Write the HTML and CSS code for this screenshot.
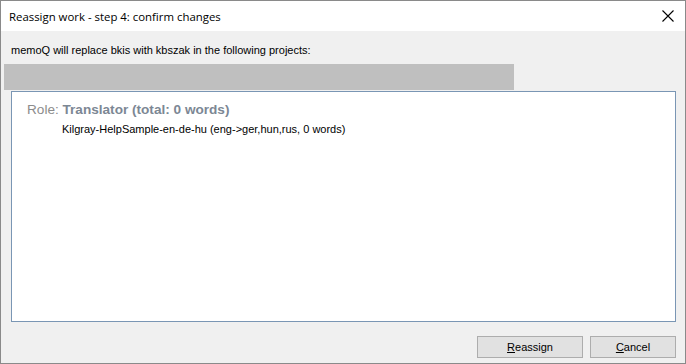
FILE: index.html
```html
<!DOCTYPE html>
<html>
<head>
<meta charset="utf-8">
<link rel="stylesheet" href="styles.css">
</head>
<body>
<div class="window">
  <div class="titlebar">
    <span class="title">Reassign work - step 4: confirm changes</span>
    <svg class="close" width="12" height="12" viewBox="0 0 12 12"><path d="M0.5 0.5 L11.5 11.5 M11.5 0.5 L0.5 11.5" stroke="#000" stroke-width="1.1" fill="none"/></svg>
  </div>
  <div class="content">
    <div class="intro">memoQ will replace bkis with kbszak in the following projects:</div>
    <div class="progress"></div>
    <div class="list">
      <div class="role"><span class="role-label">Role: </span><span class="role-name">Translator (total: 0 words)</span></div>
      <div class="project">Kilgray-HelpSample-en-de-hu (eng-&gt;ger,hun,rus, 0 words)</div>
    </div>
    <div class="buttons">
      <button class="btn"><u>R</u>eassign</button>
      <button class="btn btn-cancel"><u>C</u>ancel</button>
    </div>
  </div>
</div>
</body>
</html>
```
FILE: styles.css
```css
html, body {
  margin: 0;
  padding: 0;
}
body {
  font-family: "Liberation Sans", Arial, sans-serif;
  font-size: 11px;
  color: #000;
}
.window {
  width: 686px;
  height: 364px;
  box-sizing: border-box;
  border: 1px solid #8a8a8a;
  background: #f0f0f0;
  display: flex;
  flex-direction: column;
}
.titlebar {
  height: 30px;
  background: #fff;
  display: flex;
  align-items: center;
  justify-content: space-between;
  padding: 0 11px 0 8px;
}
.title {
  font-family: "Open Sans", "Liberation Sans", sans-serif;
  font-size: 11.4px;
  color: #000;
}
.close {
  display: block;
}
.content {
  flex: 1;
  display: flex;
  flex-direction: column;
}
.intro {
  margin: 13px 0 0 10px;
  height: 20px;
  line-height: 13px;
}
.progress {
  margin-left: 3px;
  width: 510px;
  height: 26px;
  background: #bfbfbf;
}
.list {
  margin: 1px 0 0 10px;
  width: 665px;
  height: 231px;
  box-sizing: border-box;
  border: 1px solid #7a96b4;
  background: #fff;
  padding: 10px 0 0 15px;
}
.role {
  font-size: 13.6px;
  line-height: 16px;
  color: #8c8c8c;
}
.role-name {
  font-weight: bold;
  color: #7c8794;
}
.project {
  margin: 5px 0 0 35px;
  line-height: 13px;
}
.buttons {
  display: flex;
  justify-content: flex-end;
  gap: 7px;
  margin: 14px 9px 0 0;
}
.btn {
  font-family: "Liberation Sans", Arial, sans-serif;
  font-size: 11px;
  color: #000;
  width: 106px;
  height: 22px;
  box-sizing: border-box;
  border: 1px solid #adadad;
  background: #e1e1e1;
  padding: 0;
  margin: 0;
}
.btn-cancel {
  width: 86px;
}
```
